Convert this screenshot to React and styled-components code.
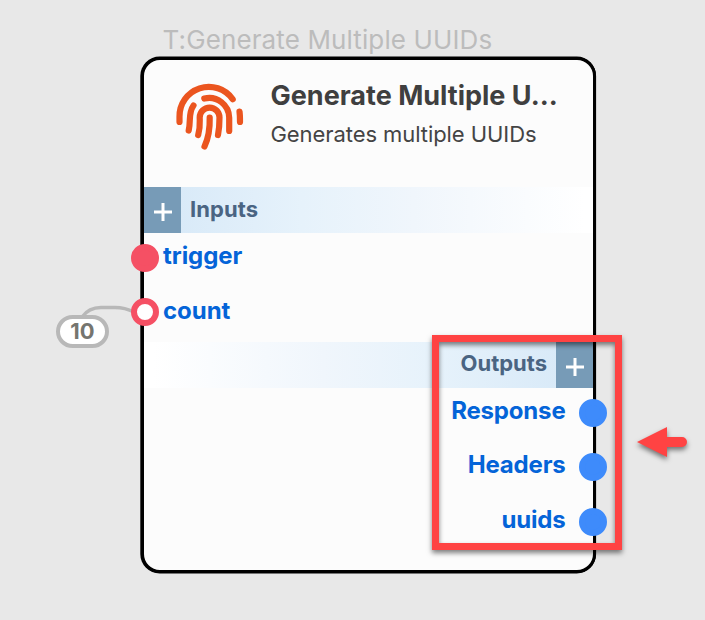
import React from "react";
import styled, { createGlobalStyle } from "styled-components";

const Global = createGlobalStyle`
  * { box-sizing: border-box; }
  body { margin: 0; background: #e8e8e8; font-family: Inter, "Liberation Sans", sans-serif; }
`;

const Canvas = styled.main`
  position: relative;
  width: 705px;
  height: 620px;
  overflow: hidden;
  background: #e8e8e8;
`;

const NodeTag = styled.div`
  position: absolute;
  left: 162.5px;
  top: 24px;
  font-size: 26px;
  line-height: 32px;
  font-weight: 400;
  letter-spacing: 0.12px;
  color: #bcbcbc;
  white-space: nowrap;
`;

const Node = styled.section`
  position: absolute;
  left: 141px;
  top: 57px;
  width: 455px;
  height: 516px;
  border: 3px solid #000;
  border-radius: 19px;
  background: #fcfcfc;
  box-shadow: -0.3px 0 0 0.4px #000;
`;

const Header = styled.header`
  display: flex;
  height: 127px;
  padding: 19px 0 0 27px;
`;

const Heading = styled.div`
  width: 290px;
  margin-left: 21.5px;
`;

const Title = styled.h1`
  margin: 0;
  font-size: 27px;
  line-height: 34px;
  font-weight: 700;
  letter-spacing: 0;
  color: #3f3f3f;
  white-space: nowrap;
`;

const Subtitle = styled.p`
  margin: 7px 0 0;
  font-size: 22px;
  line-height: 28px;
  font-weight: 400;
  letter-spacing: -0.07px;
  color: #444;
  white-space: nowrap;
`;

const Strip = styled.div`
  display: flex;
  flex-direction: ${(p) => (p.$end ? "row-reverse" : "row")};
  height: 46px;
  background: linear-gradient(${(p) => (p.$end ? "to left" : "to right")}, #d9eaf8 8%, #e6f2fb 35%, #f0f6fc 60%, #fff 98%);
`;

const AddButton = styled.button`
  display: grid;
  place-items: center;
  width: 37px;
  height: 46px;
  padding: 3px 0 0;
  border: 0;
  background: #779bb7;
`;

const StripLabel = styled.span`
  padding: 0 9px;
  font-size: 22px;
  line-height: ${(p) => (p.$end ? 43 : 44)}px;
  font-weight: 700;
  letter-spacing: ${(p) => (p.$end ? 0 : 0.1)}px;
  color: #4a6482;
`;

const Ports = styled.ul`
  display: flex;
  flex-direction: column;
  gap: 26.5px;
  margin: 0;
  padding: 10.5px 0 0;
  height: ${(p) => (p.$tall ? "165px" : "109px")};
  list-style: none;
`;

const Port = styled.li`
  display: flex;
  flex-direction: ${(p) => (p.$end ? "row-reverse" : "row")};
  align-items: center;
  gap: ${(p) => (p.$end ? 13.5 : 4)}px;
  height: 28px;
  margin: ${(p) => (p.$end ? "0 -14px 0 0" : "0 0 0 -13px")};
`;

const Dot = styled.i`
  flex: none;
  width: 28px;
  height: 28px;
  border-radius: 50%;
  border: 6px solid ${(p) => p.$color};
  background: ${(p) => (p.$open ? "#fff" : p.$color)};
`;

const PortName = styled.span`
  margin-top: ${(p) => (p.$end ? -4 : -3)}px;
  font-size: 24px;
  line-height: 28px;
  font-weight: 700;
  letter-spacing: ${(p) => (p.$end ? -0.18 : -0.05)}px;
  color: #0464d8;
`;

const Wire = styled.svg`
  position: absolute;
  left: 75px;
  top: 298px;
`;

const ValuePill = styled.div`
  position: absolute;
  left: 56px;
  top: 315px;
  width: 53px;
  height: 33px;
  border: 4px solid #b8b8b8;
  border-radius: 17px;
  background: #fff;
  color: #75756f;
  font-size: 22px;
  line-height: 25px;
  font-weight: 700;
  text-align: center;
`;

const Highlight = styled.div`
  position: absolute;
  left: 432px;
  top: 335px;
  width: 190px;
  height: 215px;
  border: 7px solid #ff4343;
  box-shadow: 0 3px 5px rgba(0, 0, 0, 0.5), inset 0 3px 5px rgba(0, 0, 0, 0.5);
`;

const Arrow = styled.svg`
  position: absolute;
  left: 629px;
  top: 419px;
  filter: drop-shadow(0 3px 2.5px rgba(0, 0, 0, 0.5));
`;

const Fingerprint = () => (
  <svg width="78" height="78" viewBox="171 79 78 78" fill="none" stroke="#eb551f" strokeWidth="6.2" strokeLinecap="round">
    <path d="M179.500 122V116.800A29.300 29.300 0 0 1 232.700 99.200" />
    <path d="M204.300 98.600A20 20 0 0 1 229.200 117.800V131" />
    <path d="M193.500 105.500C188 113 191 121 188.700 130.500" />
    <path d="M198.200 135C200.500 127 199.700 122 199.700 117.500A9.900 9.900 0 0 1 219.500 117.500C219.500 124 219 130 218 135" />
    <path d="M209.700 117.500C210 129 208.500 138 204.500 146.500" />
    <path d="M239.500 111.500C240 115 240 118 240 122" />
  </svg>
);

const Plus = () => (
  <svg width="20" height="20" viewBox="0 0 20 20" stroke="#fff" strokeWidth="3">
    <path d="M1 10H19M10 1V19" />
  </svg>
);

const inputs = [{ name: "trigger" }, { name: "count", open: true }];
const outputs = [{ name: "Response" }, { name: "Headers" }, { name: "uuids" }];

export default function App() {
  return (
    <Canvas>
      <Global />
      <NodeTag>T:Generate Multiple UUIDs</NodeTag>
      <Wire width="65" height="26" fill="none" stroke="#b8b8b8" strokeWidth="3.3">
        <path d="M7 19C12 12 19 9.500 26 9.500H40C48 9.500 53 11 59 14" />
      </Wire>
      <ValuePill>10</ValuePill>
      <Node>
        <Header>
          <Fingerprint />
          <Heading>
            <Title>Generate Multiple U...</Title>
            <Subtitle>Generates multiple UUIDs</Subtitle>
          </Heading>
        </Header>
        <Strip>
          <AddButton aria-label="Add input"><Plus /></AddButton>
          <StripLabel>Inputs</StripLabel>
        </Strip>
        <Ports>
          {inputs.map((p) => (
            <Port key={p.name}>
              <Dot $color="#f55064" $open={p.open} />
              <PortName>{p.name}</PortName>
            </Port>
          ))}
        </Ports>
        <Strip $end>
          <AddButton aria-label="Add output"><Plus /></AddButton>
          <StripLabel $end>Outputs</StripLabel>
        </Strip>
        <Ports $tall>
          {outputs.map((p) => (
            <Port key={p.name} $end>
              <Dot $color="#3e8bfb" />
              <PortName $end>{p.name}</PortName>
            </Port>
          ))}
        </Ports>
      </Node>
      <Highlight />
      <Arrow width="66" height="50" fill="#ff4343">
        <path d="M8 23L38 8V18H53A5 5 0 0 1 53 28H38V38Z" />
      </Arrow>
    </Canvas>
  );
}
